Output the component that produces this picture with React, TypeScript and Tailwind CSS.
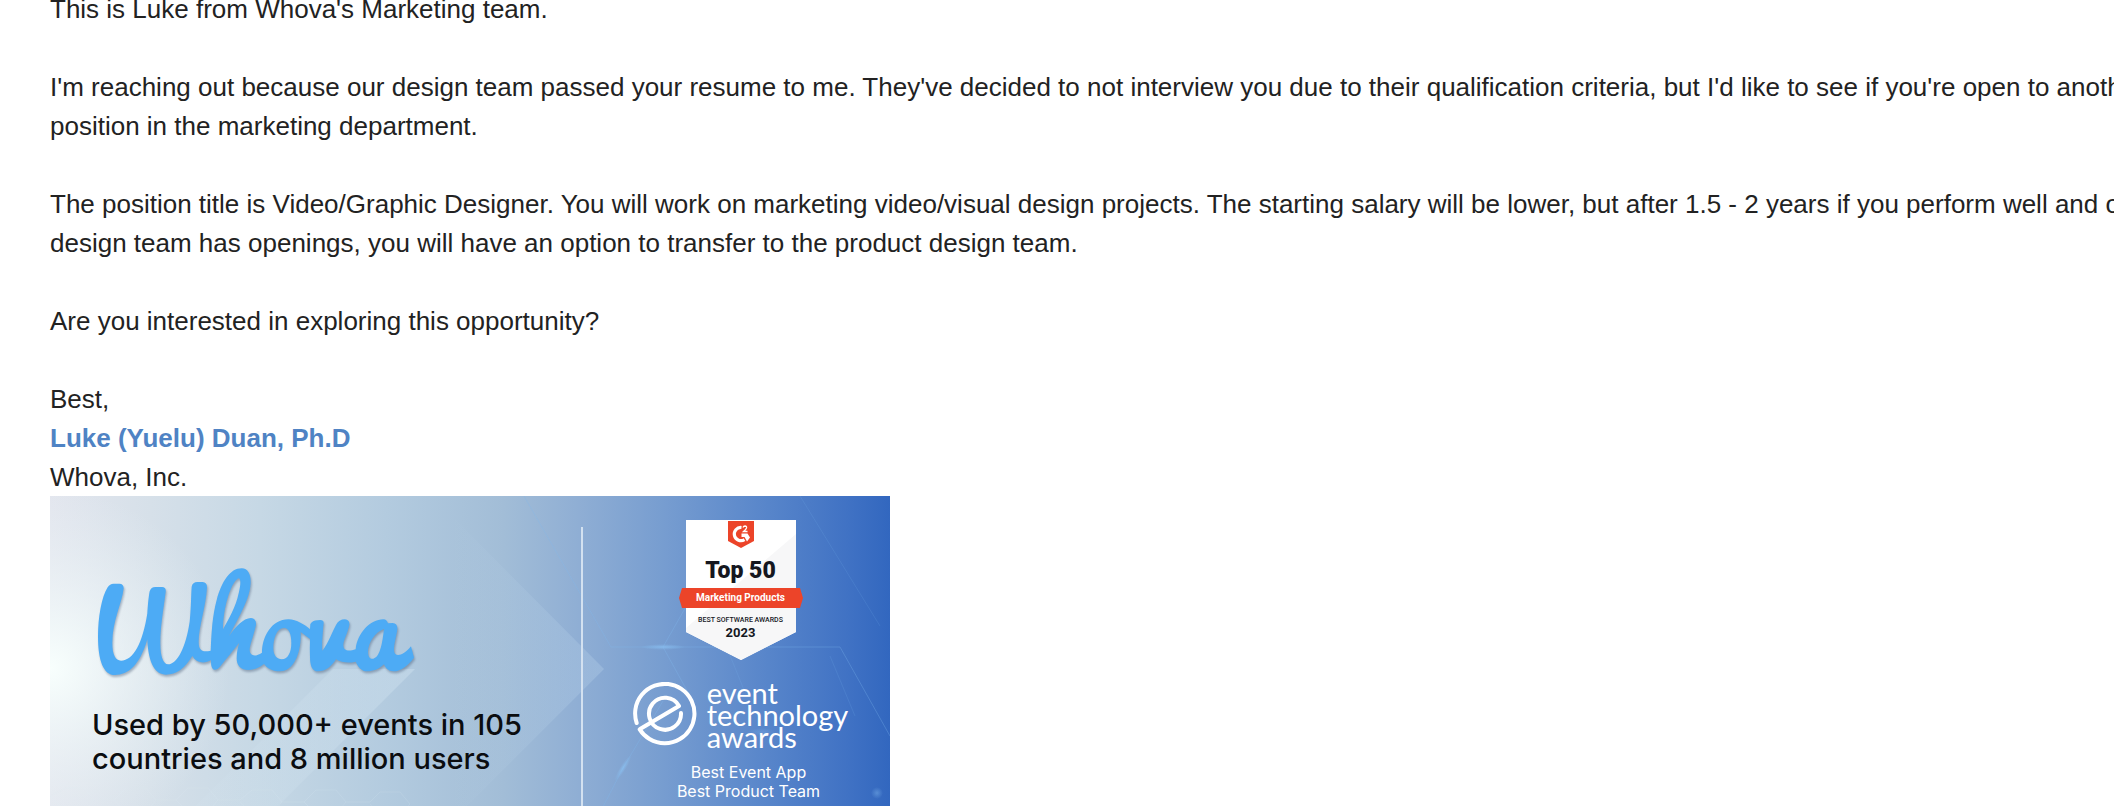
function WhovaLogo() {
  return (
    <svg
      role="img"
      aria-label="Whova"
      viewBox="0 0 1080 420"
      className="h-[140px] w-[360px] drop-shadow-[1px_2px_1px_rgba(60,80,110,0.4)]"
      fill="#4dabf5"
    >
      <path
        fillRule="evenodd"
        d="M100 101L118 101Q131 101 131 115C125 165 97 210 97 280C97 315 107 332 123 332C160 332 188 280 202 190C204 160 206 140 209 124Q213 111 226 111L246 111Q259 111 257 126C250 180 241 230 241 280C241 320 250 343 264 343C292 343 318 290 329 215C333 180 333 140 335 110Q338 96 352 96L368 96Q381 97 381 112C378 170 356 230 356 275C356 300 365 308 392 302C395 240 397 200 410 150C425 95 450 55 485 55C505 55 513 75 512 100C510 145 480 195 447 258C465 232 490 204 513 204Q530 206 528 225C520 260 509 285 509 300C509 318 525 322 546 308C546 260 575 208 625 208C650 208 675 225 690 238L691 222Q697 212 712 211Q731 207 731 218C728 250 725 285 727 302C745 280 757 245 768 225Q776 208 795 208Q810 210 808 225C803 250 790 270 790 285C790 303 805 305 827 298C832 250 870 208 910 208C918 208 922 214 924 220L938 219Q953 220 952 238C948 265 942 280 942 300C942 325 970 318 993 289L1002 323C985 345 965 364 940 364C925 364 917 355 912 343C895 358 880 364 862 364C845 364 835 352 827 335C805 340 785 338 768 328C757 345 740 364 715 364C695 364 690 345 690 320C689 300 690 280 690 267L662 246C665 300 645 364 600 364C575 364 560 353 552 342C535 355 520 360 505 360C480 360 470 345 470 325C470 305 474 290 478 278C460 300 440 325 420 350Q410 362 402 359Q392 355 393 330C375 342 350 340 337 318C315 355 290 374 258 374C228 374 205 345 202 268C180 345 145 375 105 375C70 375 54 330 54 260C54 200 65 140 83 112Q90 101 100 101ZM429 238C429 180 450 100 475 85C484 85 482 105 476 130C468 170 445 210 429 238ZM612 234C590 234 580 265 580 295C580 318 592 328 605 328C625 328 634 305 634 280C634 255 628 234 612 234ZM912 237C885 245 864 280 864 305C864 322 872 328 880 326C895 322 905 300 912 237Z"
      />
    </svg>
  );
}

function BannerBackdrop() {
  return (
    <svg
      aria-hidden="true"
      viewBox="0 0 840 336"
      preserveAspectRatio="none"
      className="absolute inset-0 h-full w-full"
    >
      <defs>
        <linearGradient id="sky" x1="0" x2="1" y1="0" y2="0">
          <stop offset="0" stopColor="#e3e6ee" />
          <stop offset=".12" stopColor="#d6e0e9" />
          <stop offset=".25" stopColor="#c6d8e5" />
          <stop offset=".4" stopColor="#b3cbdf" />
          <stop offset=".54" stopColor="#a2bdd7" />
          <stop offset=".63" stopColor="#8faed4" />
          <stop offset=".73" stopColor="#779dd0" />
          <stop offset=".84" stopColor="#5b88cb" />
          <stop offset=".95" stopColor="#4072c4" />
          <stop offset="1" stopColor="#3267bf" />
        </linearGradient>
        <radialGradient id="glow" gradientUnits="userSpaceOnUse" cx="0" cy="172" r="180">
          <stop offset="0" stopColor="#f8fffd" />
          <stop offset=".5" stopColor="#f0f8f9" stopOpacity=".5" />
          <stop offset="1" stopColor="#e8f2f6" stopOpacity="0" />
        </radialGradient>
        <linearGradient id="chevron" gradientUnits="userSpaceOnUse" x1="400" x2="554" y1="0" y2="0">
          <stop offset="0" stopColor="#c8e0f2" stopOpacity="0" />
          <stop offset="1" stopColor="#c8e0f2" stopOpacity=".25" />
        </linearGradient>
        <linearGradient id="facet" gradientUnits="userSpaceOnUse" x1="180" x2="365" y1="0" y2="0">
          <stop offset="0" stopColor="#d8e9f4" stopOpacity=".1" />
          <stop offset="1" stopColor="#d8e9f4" stopOpacity=".35" />
        </linearGradient>
        <radialGradient id="spark">
          <stop offset="0" stopColor="#8cc4f5" stopOpacity=".65" />
          <stop offset="1" stopColor="#8cc4f5" stopOpacity="0" />
        </radialGradient>
      </defs>
      <path fill="url(#sky)" d="M0 0H840V336H0Z" />
      <path fill="url(#glow)" d="M0 0H200V336H0Z" />
      <path fill="url(#chevron)" d="M385 3L554 173L391 336H300V3Z" />
      <path fill="url(#facet)" d="M365 173L202 336H120L283 173Z" />
      <g fill="none" stroke="#82baf0" strokeOpacity=".3">
        <path d="M474 0L561 151H790L840 240" />
        <path d="M613 151L650 86M613 151L640 200M573 272L613 205M573 272L540 336" />
        <path d="M694 194L660 110M750 0L830 130M780 160L805 220" strokeOpacity=".15" />
      </g>
      <g fill="none" stroke="#e6f2fb" strokeOpacity=".14">
        <path d="M0 300L16 292H34L44 304L34 316H16ZM44 304H64L76 292H96L106 304L96 316H76L64 304M106 304H126L138 292H158L168 304L158 316H138L126 304M168 304H190L202 294H222L232 306L222 318H202L190 306M232 306H254L266 294H286L296 306L286 318H266L254 306M296 306H320L330 296H350L360 308L350 320H330L320 308" />
      </g>
      <ellipse cx="613" cy="151" rx="22" ry="3" fill="url(#spark)" />
      <ellipse cx="573" cy="272" rx="3" ry="15" fill="url(#spark)" transform="rotate(32 573 272)" />
      <ellipse cx="712" cy="236" rx="14" ry="4" fill="url(#spark)" opacity=".4" />
      <circle cx="827" cy="297" r="6" fill="url(#spark)" opacity=".6" />
    </svg>
  );
}

function G2Badge() {
  return (
    <div className="relative flex h-[140px] w-[124px] flex-col items-center pt-[37px] font-['Roboto'] font-bold text-[#15171f]">
      <svg aria-hidden="true" viewBox="0 0 124 140" className="absolute inset-0 h-full w-full">
        <path fill="#fff" d="M7 0H117V112L62 140L7 112Z" />
        <path fill="#f7f7f8" d="M117 14L7 108V112L62 140L117 112Z" />
        <path fill="#ec4429" d="M49 1H75V21L62 28L49 21Z" />
        <path fill="none" stroke="#fff" strokeWidth="3.2" d="M62.500 7.500A6.600 6.600 0 1 0 65.500 19.600" />
        <path fill="none" stroke="#fff" strokeWidth="1.300" d="M64 7.500Q64.500 6 66 6Q68 6.200 67.500 8Q67 9.300 64.500 11.500H68.500" />
        <path fill="#fff" d="M62.500 13.500H68.500L71 17.500L68 21.500L65.500 17H62.500Z" />
        <path fill="#ec4429" d="M3 68H121L124 78L121 88H3L0 78Z" />
      </svg>
      <strong className="relative text-[23px] leading-[28px]">Top 50</strong>
      <span className="relative mt-[3px] text-[10px] leading-[20px] text-white">Marketing Products</span>
      <span className="relative mt-[7px] text-[7px] leading-[10px] font-medium">BEST SOFTWARE AWARDS</span>
      <span className="relative text-[13px] leading-[16px]">2023</span>
    </div>
  );
}

function EventAwards() {
  return (
    <div className="mt-[22px] flex items-start gap-[10px] text-white">
      <svg
        aria-hidden="true"
        viewBox="22 26 192 192"
        className="size-[64px]"
        fill="none"
        stroke="currentColor"
        strokeWidth="12"
        strokeLinecap="round"
        strokeLinejoin="round"
      >
        <path d="M33 149A89 89 0 1 1 42 168L160 98A48 48 0 1 0 166 119" />
      </svg>
      <p className="font-['Lato'] text-[29px] leading-[22px]">
        event
        <br />
        technology
        <br />
        awards
      </p>
    </div>
  );
}

function SignatureBanner() {
  return (
    <section className="relative flex h-[336px] w-[840px] font-['Inter']">
      <BannerBackdrop />
      <div className="relative w-[531px] pt-[54px] pl-[30px]">
        <WhovaLogo />
        <p className="mt-[18px] pl-[12px] text-[29px] leading-[34px] font-medium whitespace-nowrap text-[#0b0d10]">
          Used by 50,000+ events in 105
          <br />
          countries and 8 million users
        </p>
      </div>
      <div className="relative mt-[31px] w-[2px] bg-[#d3e1f0]" />
      <div className="relative flex flex-1 flex-col items-center pt-[24px] pl-[8px]">
        <G2Badge />
        <EventAwards />
        <p className="mt-[15px] pl-[16px] text-center text-[16px] leading-[19px] text-white">
          Best Event App
          <br />
          Best Product Team
        </p>
      </div>
    </section>
  );
}

export default function App() {
  return (
    <main className="h-screen overflow-hidden bg-white font-['Liberation_Sans',Arial,sans-serif] text-[26px] leading-[39px] text-[#222222]">
      <article className="-mt-[10px] flex flex-col gap-[39px] pl-[50px] whitespace-nowrap">
        <p>This is Luke from Whova's Marketing team.</p>
        <p>
          I'm reaching out because our design team passed your resume to me. They've decided to not interview you due to
          their qualification criteria, but I'd like to see if you're open to another
          <br />
          position in the marketing department.
        </p>
        <p>
          The position title is Video/Graphic Designer. You will work on marketing video/visual design projects. The
          starting salary will be lower, but after 1.5 - 2 years if you perform well and our
          <br />
          design team has openings, you will have an option to transfer to the product design team.
        </p>
        <p>Are you interested in exploring this opportunity?</p>
        <footer>
          <p>Best,</p>
          <p className="font-bold text-[#4f83c4]">Luke (Yuelu) Duan, Ph.D</p>
          <p className="leading-[38px]">Whova, Inc.</p>
          <SignatureBanner />
        </footer>
      </article>
    </main>
  );
}
